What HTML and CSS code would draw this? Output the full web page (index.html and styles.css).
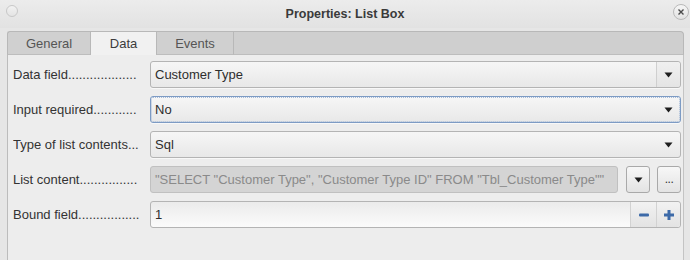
FILE: index.html
```html
<!DOCTYPE html>
<html lang="en">
<head>
  <meta charset="UTF-8">
  <title>Properties: List Box</title>
  <link rel="stylesheet" href="styles.css">
</head>
<body>
  <!-- Window title bar -->
  <div class="titlebar">
    <span class="win-dot"></span>
    <span class="title">Properties: List Box</span>
    <span class="win-close">
      <svg width="10" height="10" viewBox="0 0 10 10"><path d="M2.5 2.5 L7.5 7.5 M7.5 2.5 L2.5 7.5" stroke="#4a4a4a" stroke-width="1.4" fill="none"/></svg>
    </span>
  </div>

  <!-- Tabs -->
  <div class="tabs">
    <div class="tab">General</div>
    <div class="tab active">Data</div>
    <div class="tab">Events</div>
    <div class="tab-fill"></div>
  </div>

  <div class="panel">
    <div class="row">
      <label class="label">Data field...................</label>
      <div class="combo">
        <span class="combo-text">Customer Type</span>
        <span class="combo-btn"><svg width="9" height="6" viewBox="0 0 9 6"><path d="M0.5 0.5 H8.5 L4.5 5.5 Z" fill="#1e1e1e"/></svg></span>
      </div>
    </div>

    <div class="row">
      <label class="label">Input required............</label>
      <div class="combo focus">
        <span class="combo-text">No</span>
        <span class="combo-arrow"><svg width="9" height="6" viewBox="0 0 9 6"><path d="M0.5 0.5 H8.5 L4.5 5.5 Z" fill="#1e1e1e"/></svg></span>
      </div>
    </div>

    <div class="row">
      <label class="label">Type of list contents...</label>
      <div class="combo">
        <span class="combo-text">Sql</span>
        <span class="combo-arrow"><svg width="9" height="6" viewBox="0 0 9 6"><path d="M0.5 0.5 H8.5 L4.5 5.5 Z" fill="#1e1e1e"/></svg></span>
      </div>
    </div>

    <div class="row">
      <label class="label">List content................</label>
      <div class="field-group">
        <div class="field disabled">"SELECT "Customer Type", "Customer Type ID" FROM "Tbl_Customer Type""</div>
        <button class="small-btn"><svg width="9" height="6" viewBox="0 0 9 6"><path d="M0.5 0.5 H8.5 L4.5 5.5 Z" fill="#1e1e1e"/></svg></button>
        <button class="small-btn dots">...</button>
      </div>
    </div>

    <div class="row">
      <label class="label">Bound field.................</label>
      <div class="spin">
        <span class="spin-text">1</span>
        <span class="spin-btn"><svg width="12" height="12" viewBox="0 0 12 12"><rect x="1" y="4.5" width="10" height="3" rx="1" fill="#3d6aa8"/></svg></span>
        <span class="spin-btn"><svg width="12" height="12" viewBox="0 0 12 12"><path d="M4.5 1 H7.5 V4.5 H11 V7.5 H7.5 V11 H4.5 V7.5 H1 V4.5 H4.5 Z" fill="#3d6aa8"/></svg></span>
      </div>
    </div>
  </div>
</body>
</html>
```

FILE: styles.css
```css
/* Basic styling */
* {
  margin: 0;
  padding: 0;
  box-sizing: border-box;
  font-family: "Liberation Sans", Arial, sans-serif;
}
body {
  background-color: #e6e6e6;
  color: #3c3c3c;
  width: 690px;
  height: 260px;
  overflow: hidden;
  font-size: 13px;
}

/* Title bar */
.titlebar {
  height: 28px;
  display: flex;
  align-items: center;
  justify-content: center;
  position: relative;
  background: linear-gradient(#ececec, #e2e2e2);
}
.title {
  font-weight: bold;
  font-size: 12.5px;
  color: #3a3a3a;
}
.win-dot {
  position: absolute;
  left: 6px;
  top: 5px;
  width: 12px;
  height: 12px;
  border-radius: 50%;
  border: 1px solid #c8c8c8;
  background: linear-gradient(#f2f2f2, #e4e4e4);
}
.win-close {
  position: absolute;
  right: 1px;
  top: 4px;
  width: 16px;
  height: 16px;
  border-radius: 50%;
  border: 1px solid #b9b9b9;
  background: linear-gradient(#f6f6f6, #e2e2e2);
  display: flex;
  align-items: center;
  justify-content: center;
}

/* Tabs */
.tabs {
  display: flex;
  margin: 3px 6px 0 7px;
  height: 24px;
}
.tab {
  padding: 0 0;
  display: flex;
  align-items: center;
  justify-content: center;
  background: #d0d0d0;
  border-top: 1px solid #b8b8b8;
  border-left: 1px solid #b8b8b8;
  border-bottom: 1px solid #bdbdbd;
  color: #555;
  font-size: 13px;
}
.tab:nth-child(1) {
  width: 83px;
  border-top-left-radius: 3px;
}
.tab:nth-child(3) {
  width: 78px;
  border-right: 1px solid #b8b8b8;
}
.tab.active {
  width: 66px;
  background: #f1f1f1;
  border-bottom: none;
  color: #3c3c3c;
}
.tab-fill {
  flex: 1;
  background: #cfcfcf;
  border-top: 1px solid #b8b8b8;
  border-right: 1px solid #b8b8b8;
  border-bottom: 1px solid #bdbdbd;
  border-top-right-radius: 4px;
}

/* Content panel */
.panel {
  margin: 0 6px 0 7px;
  height: 210px;
  background: #ededed;
  border-left: 1px solid #bcbcbc;
  border-right: 1px solid #c4c4c4;
  padding: 6px 2px 0 5px;
  display: flex;
  flex-direction: column;
  gap: 8px;
}
.row {
  display: flex;
  align-items: center;
  height: 27px;
}
.label {
  width: 137px;
  flex: none;
  white-space: nowrap;
  overflow: hidden;
  color: #333;
}

/* Combo boxes */
.combo {
  flex: 1;
  height: 27px;
  display: flex;
  align-items: center;
  border: 1px solid #b4b4b4;
  border-radius: 3px;
  background: linear-gradient(#f6f6f6, #e8e8e8);
  box-shadow: 0 1px 0 rgba(255, 255, 255, 0.6);
}
.combo.focus {
  border: 1px solid #7d9bc4;
  outline: 1px dotted #a8bcd8;
  outline-offset: -2px;
}
.combo-text {
  flex: 1;
  padding-left: 4px;
  color: #2e2e2e;
}
.combo-btn {
  width: 24px;
  height: 100%;
  border-left: 1px solid #cfcfcf;
  display: flex;
  align-items: center;
  justify-content: center;
  background: linear-gradient(#f0f0f0, #e4e4e4);
  border-radius: 0 3px 3px 0;
}
.combo-arrow {
  width: 24px;
  display: flex;
  align-items: center;
  justify-content: center;
}

/* Text field with buttons */
.field-group {
  flex: 1;
  display: flex;
  align-items: center;
  height: 27px;
}
.field {
  flex: 1;
  height: 27px;
  line-height: 25px;
  padding-left: 4px;
  border: 1px solid #c0c0c0;
  border-radius: 3px;
  white-space: nowrap;
  overflow: hidden;
}
.field.disabled {
  background: #d4d4d4;
  color: #8a8a8a;
}
.small-btn {
  width: 24px;
  height: 27px;
  margin-left: 8px;
  border: 1px solid #a9a9a9;
  border-radius: 3px;
  background: linear-gradient(#f7f7f7, #e3e3e3);
  display: flex;
  align-items: center;
  justify-content: center;
  color: #333;
  font-size: 12px;
}
.small-btn.dots {
  margin-left: 7px;
  align-items: flex-end;
  padding-bottom: 6px;
  letter-spacing: -0.5px;
}

/* Spin field */
.spin {
  flex: 1;
  height: 27px;
  display: flex;
  align-items: center;
  border: 1px solid #b4b4b4;
  border-radius: 3px;
  background: linear-gradient(#ebebeb, #fbfbfb);
}
.spin-text {
  flex: 1;
  padding-left: 4px;
  color: #2e2e2e;
}
.spin-btn {
  width: 26px;
  height: 100%;
  display: flex;
  align-items: center;
  justify-content: center;
  border-left: 1px solid #d2d2d2;
  background: linear-gradient(#f2f2f2, #e3e3e3);
}
.spin-btn:last-child {
  width: 24px;
  border-radius: 0 3px 3px 0;
}
```
